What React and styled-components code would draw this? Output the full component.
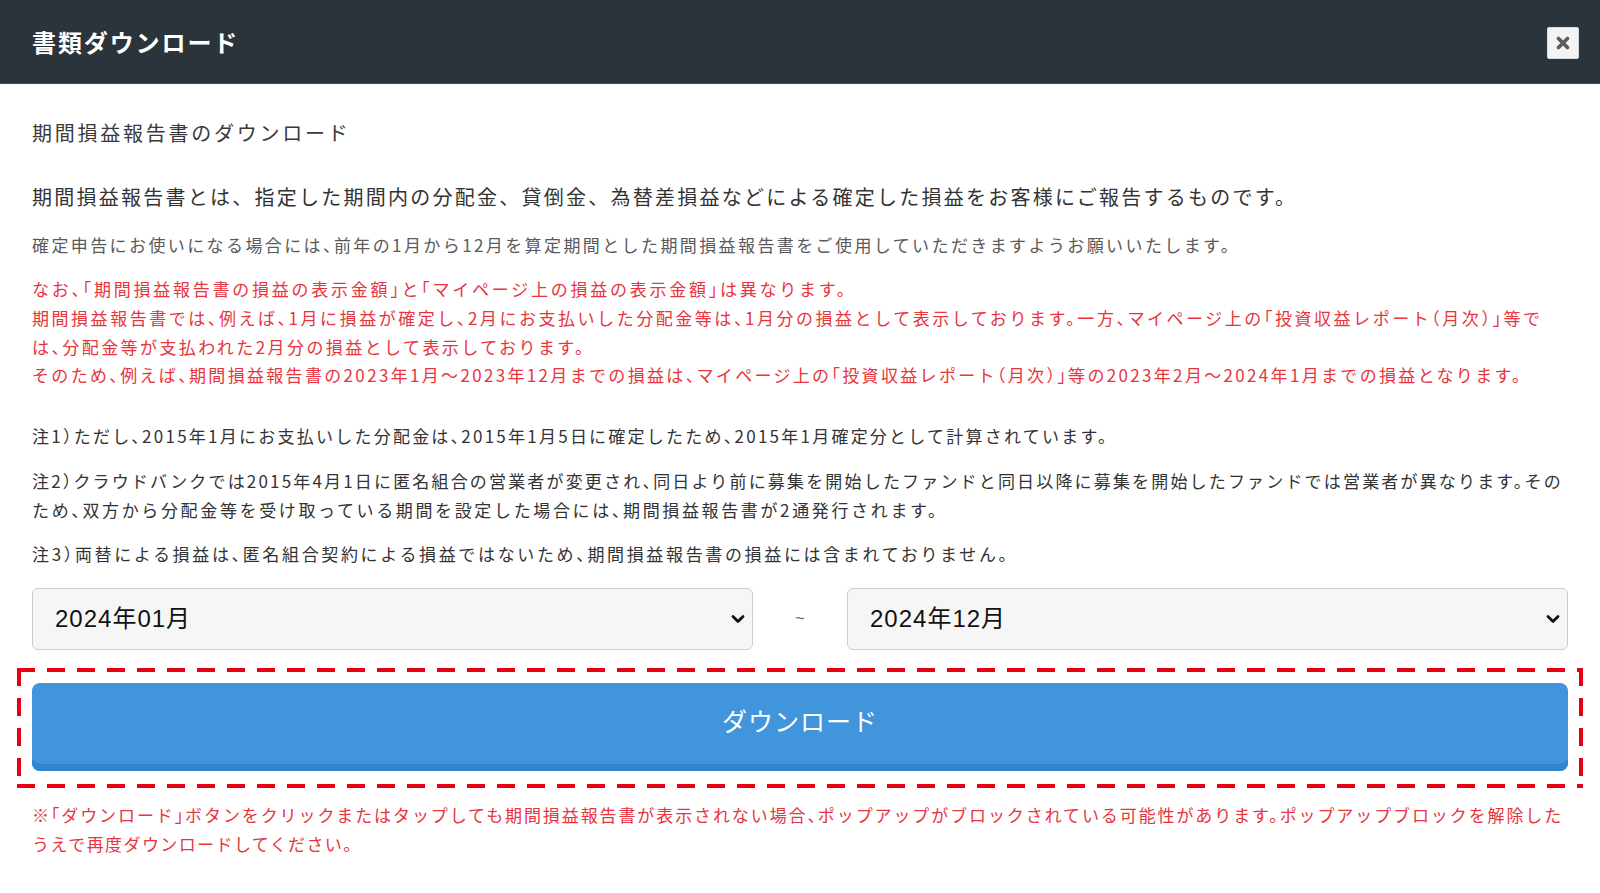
import React from 'react';
import styled, { createGlobalStyle } from 'styled-components';

const Global = createGlobalStyle`
  html, body { margin: 0; padding: 0; background: #fff; }
  body { font-family: "Noto Sans CJK JP", "Noto Sans", sans-serif; }
  * { box-sizing: border-box; }
`;

const Modal = styled.div`
  width: 1600px;
  min-height: 893px;
  background: #fff;
`;

const Header = styled.header`
  height: 84px;
  background: #2b343a;
  border-bottom: 1px solid #454d53;
  display: flex;
  align-items: center;
  justify-content: space-between;
  padding: 0 21px 0 32px;
`;

const Title = styled.h1`
  margin: 0;
  color: #fff;
  font-size: 24px;
  font-weight: 700;
  letter-spacing: 1.9px;
  line-height: 1;
`;

const CloseButton = styled.button`
  width: 32px;
  height: 32px;
  padding: 0;
  margin-top: 2px;
  background: #f3f3f3;
  border: 1px solid #d9d9d9;
  border-radius: 2px;
  display: flex;
  align-items: center;
  justify-content: center;
  cursor: pointer;
`;

const Body = styled.main`
  padding: 34px 32px 0;
`;

const SectionTitle = styled.h2`
  margin: 0;
  font-size: 20px;
  font-weight: 400;
  letter-spacing: 2.75px;
  line-height: 30px;
  color: #3a3a3a;
`;

const Lead = styled.p`
  margin: 33px 0 0;
  font-size: 20px;
  letter-spacing: 2.25px;
  line-height: 32px;
  color: #333;
`;

const tones = {
  muted: { color: '#5a5a5a', ls: '2.4px' },
  alert: { color: '#e8343d', ls: '2.5px' },
  note: { color: '#333', ls: '2.2px' },
};

const Text = styled.div`
  margin: ${(p) => p.$gap || '16px'} 0 0;
  font-size: 17px;
  font-feature-settings: "halt";
  letter-spacing: ${(p) => tones[p.$tone].ls};
  line-height: 28.7px;
  color: ${(p) => tones[p.$tone].color};
`;

const Line = styled.span`
  display: block;
  white-space: nowrap;
  letter-spacing: ${(p) => p.$ls || 'inherit'};
`;

const RangeRow = styled.div`
  margin-top: 19px;
  display: grid;
  grid-template-columns: 1fr 94px 1fr;
  align-items: center;
`;

const SelectWrap = styled.div`
  position: relative;
`;

const Select = styled.select`
  width: 100%;
  height: 62px;
  appearance: none;
  -webkit-appearance: none;
  background: #f6f6f6;
  border: 1px solid #cdcdcd;
  border-radius: 6px;
  padding: 0 40px 0 22px;
  font-family: "Liberation Sans", "Noto Sans CJK JP", sans-serif;
  font-size: 24px;
  letter-spacing: 1px;
  color: #111;
`;

const Chevron = styled.svg`
  position: absolute;
  right: 8px;
  top: 50%;
  transform: translateY(-50%);
  pointer-events: none;
`;

const Tilde = styled.span`
  text-align: center;
  font-size: 16px;
  color: #666;
  font-family: "Liberation Sans", sans-serif;
`;

const DashedFrame = styled.div`
  margin: 18px -15px 0;
  padding: 15px 15px 17px;
  background:
    repeating-linear-gradient(90deg, #e60012 0 18px, transparent 18px 30px) 0 0 / 100% 4px no-repeat,
    repeating-linear-gradient(90deg, #e60012 0 18px, transparent 18px 30px) 0 100% / 100% 4px no-repeat,
    repeating-linear-gradient(180deg, #e60012 0 18px, transparent 18px 30px) 0 0 / 4px 100% no-repeat,
    repeating-linear-gradient(180deg, #e60012 0 18px, transparent 18px 30px) 100% 0 / 4px 100% no-repeat;
`;

const DownloadButton = styled.button`
  display: block;
  width: 100%;
  height: 88px;
  border: none;
  border-radius: 8px;
  background: #4195dc;
  box-shadow: inset 0 -7px 0 #2f86cf;
  color: #fff;
  font-family: "Noto Sans CJK JP", sans-serif;
  font-size: 25px;
  font-weight: 400;
  letter-spacing: 1px;
  padding: 0 0 13px;
  cursor: pointer;
`;

function DateSelect({ value }) {
  return (
    <SelectWrap>
      <Select defaultValue={value}>
        <option value={value}>{value}</option>
      </Select>
      <Chevron width="14" height="10" viewBox="0 0 14 10">
        <path d="M2 2.5 L7 7.5 L12 2.5" fill="none" stroke="#111" strokeWidth="2.8" strokeLinecap="round" strokeLinejoin="round" />
      </Chevron>
    </SelectWrap>
  );
}

export default function App() {
  return (
    <Modal>
      <Global />
      <Header>
        <Title>書類ダウンロード</Title>
        <CloseButton aria-label="閉じる">
          <svg width="14" height="14" viewBox="0 0 14 14">
            <path d="M2.5 2.5 L11.5 11.5 M11.5 2.5 L2.5 11.5" stroke="#5b5b5b" strokeWidth="3.6" strokeLinecap="round" />
          </svg>
        </CloseButton>
      </Header>
      <Body>
        <SectionTitle>期間損益報告書のダウンロード</SectionTitle>
        <Lead>期間損益報告書とは、指定した期間内の分配金、貸倒金、為替差損益などによる確定した損益をお客様にご報告するものです。</Lead>
        <Text $tone="muted" $gap="17.6px">確定申告にお使いになる場合には、前年の1月から12月を算定期間とした期間損益報告書をご使用していただきますようお願いいたします。</Text>
        <Text $tone="alert">
          <Line $ls="2.75px">なお、「期間損益報告書の損益の表示金額」と「マイページ上の損益の表示金額」は異なります。</Line>
          <Line $ls="2.54px">期間損益報告書では、例えば、1月に損益が確定し、2月にお支払いした分配金等は、1月分の損益として表示しております。一方、マイページ上の「投資収益レポート（月次）」等で</Line>
          <Line $ls="2.42px">は、分配金等が支払われた2月分の損益として表示しております。</Line>
          <Line $ls="2.33px">そのため、例えば、期間損益報告書の2023年1月〜2023年12月までの損益は、マイページ上の「投資収益レポート（月次）」等の2023年2月〜2024年1月までの損益となります。</Line>
        </Text>
        <Text $tone="note" $gap="32px">
          <Line $ls="2.24px">注1）ただし、2015年1月にお支払いした分配金は、2015年1月5日に確定したため、2015年1月確定分として計算されています。</Line>
        </Text>
        <Text $tone="note">
          <Line $ls="2.17px">注2）クラウドバンクでは2015年4月1日に匿名組合の営業者が変更され、同日より前に募集を開始したファンドと同日以降に募集を開始したファンドでは営業者が異なります。その</Line>
          <Line $ls="2.64px">ため、双方から分配金等を受け取っている期間を設定した場合には、期間損益報告書が2通発行されます。</Line>
        </Text>
        <Text $tone="note" $gap="15.6px">
          <Line $ls="2.65px">注3）両替による損益は、匿名組合契約による損益ではないため、期間損益報告書の損益には含まれておりません。</Line>
        </Text>
        <RangeRow>
          <DateSelect value="2024年01月" />
          <Tilde>~</Tilde>
          <DateSelect value="2024年12月" />
        </RangeRow>
        <DashedFrame>
          <DownloadButton>ダウンロード</DownloadButton>
        </DashedFrame>
        <Text $tone="alert" $gap="13.6px">
          <Line $ls="1.9px">※「ダウンロード」ボタンをクリックまたはタップしても期間損益報告書が表示されない場合、ポップアップがブロックされている可能性があります。ポップアップブロックを解除した</Line>
          <Line $ls="1.4px">うえで再度ダウンロードしてください。</Line>
        </Text>
      </Body>
    </Modal>
  );
}
